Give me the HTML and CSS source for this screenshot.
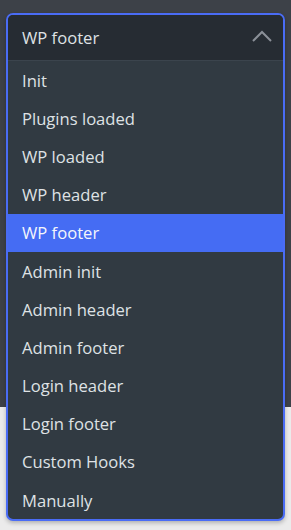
FILE: index.html
```html
<!DOCTYPE html>
<html>
<head>
<meta charset="utf-8">
<link rel="stylesheet" href="styles.css">
</head>
<body>
<div class="select">
  <div class="select-head">
    <span class="select-value">WP footer</span>
    <svg class="chevron" width="20" height="12" viewBox="0 0 20 12"><path d="M1 11 L10 2 L19 11" fill="none" stroke="#8b9098" stroke-width="2"/></svg>
  </div>
  <ul class="options">
    <li class="option">Init</li>
    <li class="option">Plugins loaded</li>
    <li class="option">WP loaded</li>
    <li class="option">WP header</li>
    <li class="option selected">WP footer</li>
    <li class="option">Admin init</li>
    <li class="option">Admin header</li>
    <li class="option">Admin footer</li>
    <li class="option">Login header</li>
    <li class="option">Login footer</li>
    <li class="option">Custom Hooks</li>
    <li class="option">Manually</li>
  </ul>
</div>
</body>
</html>
```
FILE: styles.css
```css
html, body {
  margin: 0;
  padding: 0;
}
body {
  width: 291px;
  height: 530px;
  background: linear-gradient(#3d4148 0, #3d4148 407px, #ebebeb 407px);
  font-family: "Open Sans", "Noto Sans", sans-serif;
  font-size: 16.6px;
  color: #dfe2e5;
  padding-top: 13px;
  box-sizing: border-box;
}
.select {
  margin: 0 6px;
  border: 2px solid #4a6cf5;
  border-radius: 7px;
  overflow: hidden;
  background: #313a42;
  box-shadow: 0 2px 4px rgba(0,0,0,0.25);
}
.select-head {
  height: 45px;
  display: flex;
  align-items: center;
  justify-content: space-between;
  padding: 0 11px 0 14px;
  background: #262c33;
  border-bottom: 1px solid #3b444d;
}
.chevron {
  display: block;
  margin-top: -4px;
}
.options {
  list-style: none;
  margin: 0;
  padding: 0;
}
.option {
  height: 38.2px;
  display: flex;
  align-items: center;
  padding-left: 14px;
}
.option.selected {
  background: #456cf3;
  color: #f4f6fb;
}
```
